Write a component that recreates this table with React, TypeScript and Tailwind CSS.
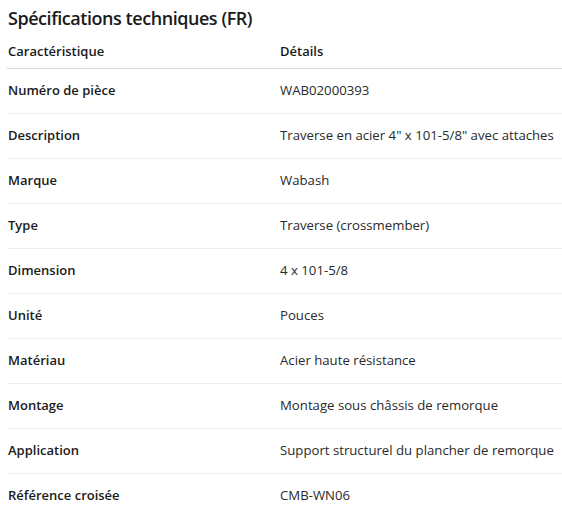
const rows: [string, string][] = [
    ["Numéro de pièce", "WAB02000393"],
    ["Description", 'Traverse en acier 4" x 101-5/8" avec attaches'],
    ["Marque", "Wabash"],
    ["Type", "Traverse (crossmember)"],
    ["Dimension", "4 x 101-5/8"],
    ["Unité", "Pouces"],
    ["Matériau", "Acier haute résistance"],
    ["Montage", "Montage sous châssis de remorque"],
    ["Application", "Support structurel du plancher de remorque"],
    ["Référence croisée", "CMB-WN06"],
];

export default function App() {
    return (
        <div className="pl-[7px] bg-white text-[#1a1a1a] font-['Open_Sans',sans-serif] overflow-hidden w-[562px] h-[513px]">
            <h2 className="h-[36px] pt-[5px] pl-[1px] text-[18px] leading-[26px] font-semibold tracking-[-0.45px]">Spécifications techniques (FR)</h2>
            <div className="w-[600px]">
                <div className="flex h-[33px] items-center border-b border-[#d6d6d6] text-[13px] font-semibold">
                    <div className="w-[273px] pl-[1px]">Caractéristique</div>
                    <div>Détails</div>
                </div>
                {rows.map(([label, value]) => (
                    <div key={label} className="flex h-[45px] items-center border-b border-[#eeeeee] text-[13px]">
                        <div className="w-[273px] pl-[1px] font-semibold">{label}</div>
                        <div className="text-[#2a2a2a] text-[13.2px]">{value}</div>
                    </div>
                ))}
            </div>
        </div>
    );
}
